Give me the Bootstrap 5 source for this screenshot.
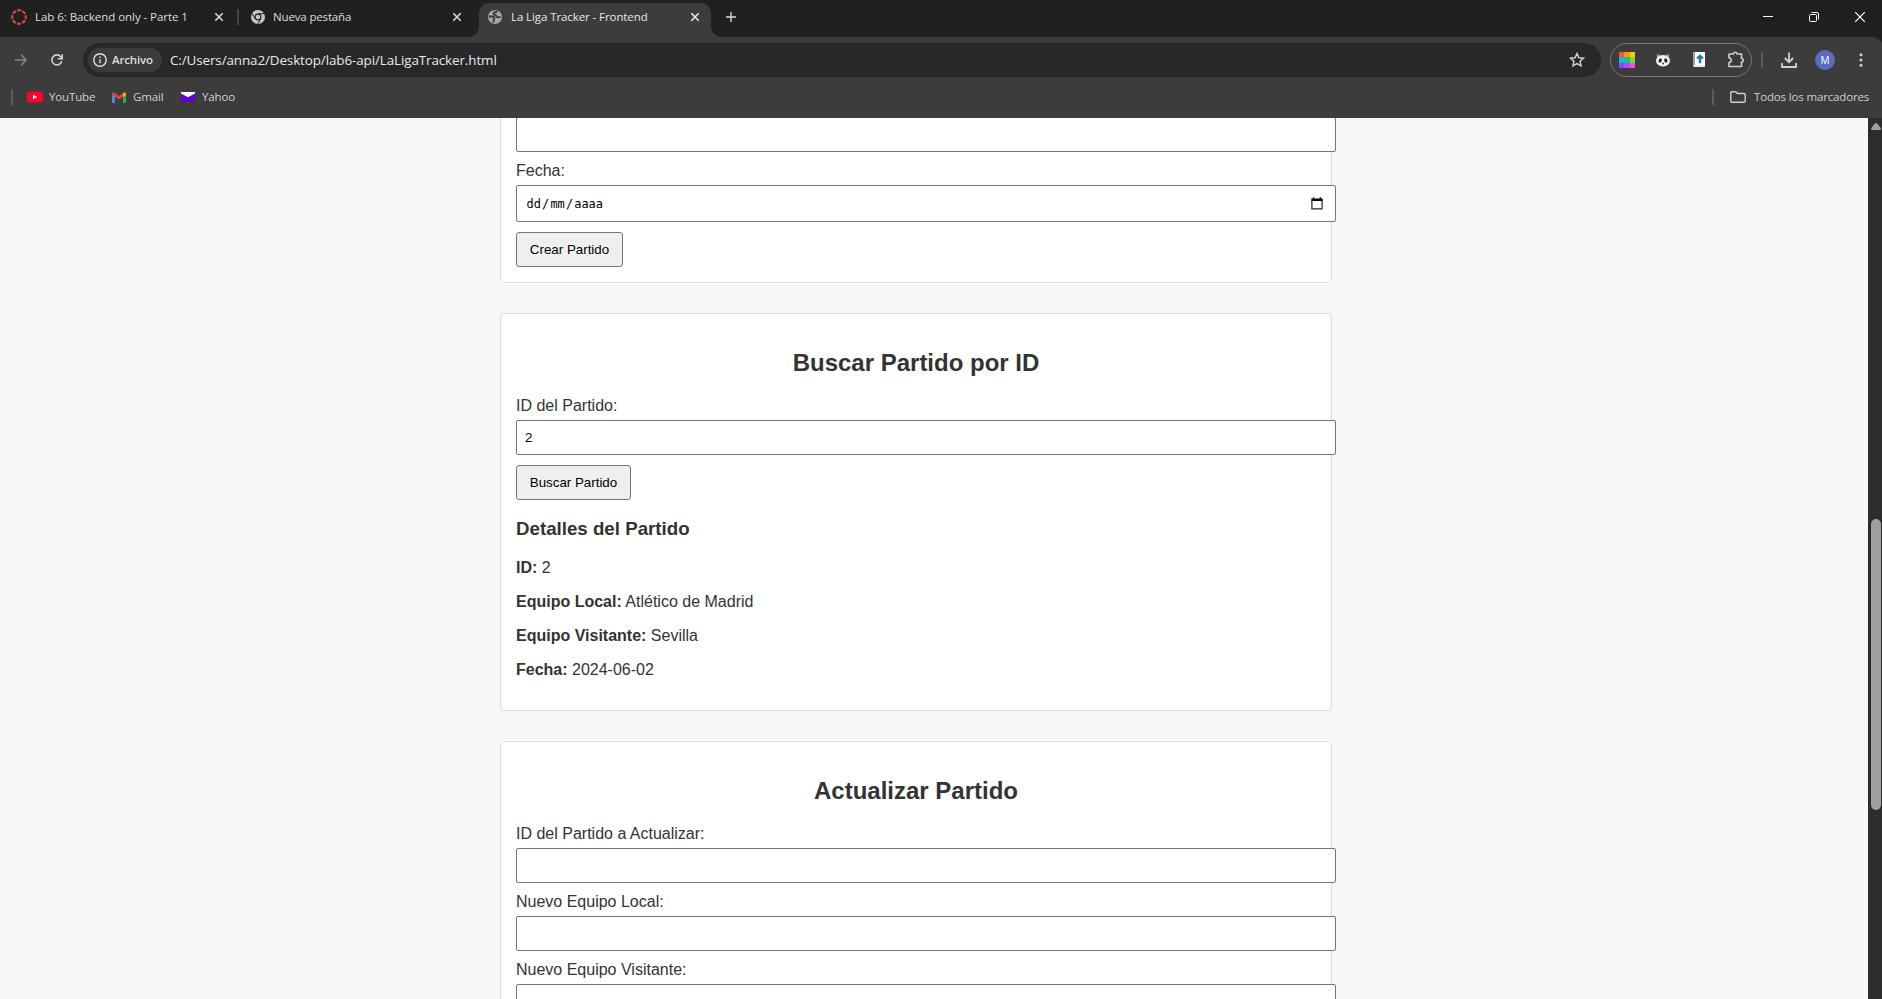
<!DOCTYPE html>
<html lang="es">
<head>
<meta charset="utf-8">
<title>La Liga Tracker - Frontend</title>
<link href="https://cdn.jsdelivr.net/npm/bootstrap@5.3.0/dist/css/bootstrap.min.css" rel="stylesheet">
<style>
  body{height:999px;background:#f7f7f7;color:#333;font-family:"Liberation Sans",Arial,sans-serif;font-size:16px;line-height:18px}
  svg{display:block;flex:none}
  /* browser chrome */
  .chrome{font-family:"Open Sans","Noto Sans",sans-serif;font-size:11.5px;line-height:16px;letter-spacing:-.15px;color:#dcdcdc;background:#1f2120;flex:none}
  .tabstrip{height:37px}
  .tab{height:37px;padding-bottom:3px}
  .tab-a{width:237px;padding-left:11px;letter-spacing:-.05px}
  .tab-b{width:240px;padding-left:12px}
  .tab-on{width:232px;height:34px;margin-top:3px;padding:0 0 6px 9px;background:#3c3c3c;border-radius:10px 10px 0 0;position:relative;color:#e8e8e8;letter-spacing:-.09px}
  .tab-on::before,.tab-on::after{content:"";position:absolute;bottom:0;width:10px;height:10px}
  .tab-on::before{left:-10px;background:radial-gradient(circle at 0 0,#1f2120 9.5px,#3c3c3c 10px)}
  .tab-on::after{right:-10px;background:radial-gradient(circle at 100% 0,#1f2120 9.5px,#3c3c3c 10px)}
  .vline{width:2px;height:16px;background:#5c5c5c;flex:none}
  .tab .vline{background:#444}
  .tab-x{margin-left:auto;margin-right:13px}
  .winbtn{width:46px;height:34px}
  .toolbar{height:46px;padding-top:6px;background:#3c3c3c;border-top-right-radius:9px}
  .slot{width:36px;height:34px;flex:none}
  .omni{width:1518px;height:34px;border-radius:17px;background:#282828;padding-left:5px;flex:none}
  .chip{width:74px;height:24px;border-radius:12px;background:#3c3c3c;padding-left:5px;font-weight:600}
  .url{font-size:13.4px;letter-spacing:-.09px;color:#e8e8e8}
  .exts{width:142px;height:34px;border:1px solid #777;border-radius:17px;margin-left:9px;flex:none}
  .avatar{width:20px;height:20px;border-radius:50%;background:#5c6bc0;color:#fff;font-size:10px}
  .bookmarks{height:35px;padding:0 12px 7px 11px;background:#3c3c3c;color:#cfcfcf}
  .t{white-space:nowrap}
  /* page */
  .page{overflow:hidden;min-height:0}
  .col-main{width:832px;margin-left:500px;margin-top:-1px;flex:none}
  .panel{background:#fff;border:1px solid #ddd;border-radius:5px;padding:15px;margin-bottom:30px}
  .panel-first{border-top:0;border-radius:0 0 5px 5px;padding-top:0}
  .panel h2{font-size:24px;line-height:28px;font-weight:700;margin:20px 0;text-align:center}
  .panel h3{font-size:18.72px;line-height:22px;font-weight:700;margin:18px 0 19px}
  .panel p{margin:0 0 16px}
  .panel label{display:block;margin-bottom:5px}
  .field{display:flex;align-items:center;width:820px;height:35px;background:#fff;border:1px solid #767676;border-radius:2px;padding:0 8px;margin-bottom:10px;font-size:13.33px;color:#000;outline:0}
  .field-date{height:37px;justify-content:space-between;padding:0 12px 0 9.5px;font-family:"DejaVu Sans Mono",monospace;font-size:11.9px}
  .field-date i{font-style:normal;margin:0 1.2px}
  .act{height:35px;border:1px solid #767676;border-radius:3px;background:#efefef;color:#000;font-size:13.33px;padding:0;display:block}
  .scroller{width:14px;background:#2c2c2c;padding:5px 1px 0 3px;flex:none}
  .thumb{width:10px;height:291px;border-radius:5px;background:#9f9f9f;margin-top:389px}
</style>
</head>
<body class="d-flex flex-column overflow-hidden">
<header class="chrome">
  <div class="tabstrip d-flex">
    <div class="tab tab-a d-flex align-items-center">
      <svg width="16" height="16" viewBox="0 0 16 16"><circle cx="8" cy="8" r="6.8" fill="none" stroke="#d64a3c" stroke-width="2.2" stroke-dasharray="4 1.34" stroke-dashoffset="2"/></svg>
      <span class="t" style="margin-left:8px">Lab 6: Backend only - Parte 1</span>
      <svg class="tab-x" width="10" height="10" viewBox="0 0 10 10" stroke="#d8d8d8" stroke-width="1.6"><path d="M1.3 1.3l7.4 7.4M8.7 1.3L1.3 8.7"/></svg>
    </div>
    <div class="tab d-flex align-items-center"><span class="vline"></span></div>
    <div class="tab tab-b d-flex align-items-center">
      <svg width="14" height="14" viewBox="0 0 14 14"><circle cx="7" cy="7" r="7" fill="#c4c7c5"/><circle cx="7" cy="7" r="3.4" fill="#1f2120"/><circle cx="7" cy="7" r="2.3" fill="#c4c7c5"/><path d="M7 3.7h6.3M4.15 8.7L1.1 3.500M9.850 8.700L6.700 14" stroke="#1f2120" stroke-width="1"/></svg>
      <span class="t" style="margin-left:8px">Nueva pestaña</span>
      <svg class="tab-x" style="margin-right:17px" width="10" height="10" viewBox="0 0 10 10" stroke="#d8d8d8" stroke-width="1.6"><path d="M1.3 1.3l7.4 7.4M8.7 1.3L1.3 8.7"/></svg>
    </div>
    <div class="tab-on d-flex align-items-center">
      <svg width="14" height="14" viewBox="0 0 14 14"><circle cx="7" cy="7" r="7" fill="#a2a8ad"/><path d="M9 .8Q8.800 2.200 7 2.300 5.300 2.400 5.600 4 5.700 5 7.300 5 8.300 5 8.300 6.300 8.300 7.300 9.800 7.200 11.500 7.200 12.800 6.800M.8 6.500H4Q6 6.500 6.300 8.200 6.500 9.500 5.600 10 5.200 10.500 5.600 12.500" fill="none" stroke="#3c3c3c" stroke-width="1.900"/></svg>
      <span class="t" style="margin-left:9px">La Liga Tracker - Frontend</span>
      <svg class="tab-x" style="margin-right:11px" width="10" height="10" viewBox="0 0 10 10" stroke="#e8e8e8" stroke-width="1.6"><path d="M1.3 1.3l7.4 7.4M8.7 1.3L1.3 8.7"/></svg>
    </div>
    <svg style="margin:12px 0 0 15px" width="10" height="10" viewBox="0 0 10 10" stroke="#d8d8d8" stroke-width="1.4"><path d="M0 5h10M5 0v10"/></svg>
    <div class="ms-auto d-flex" style="margin-right:-1px">
      <div class="winbtn d-flex align-items-center justify-content-center"><svg width="10" height="10"><path d="M0 4.5h10" stroke="#fff"/></svg></div>
      <div class="winbtn d-flex align-items-center justify-content-center"><svg width="10" height="10" fill="none" stroke="#fff"><rect x=".5" y="2.5" width="7" height="7" rx="1"/><path d="M2.5 .5H8q1.500 0 1.500 1.500V7.500"/></svg></div>
      <div class="winbtn d-flex align-items-center justify-content-center"><svg width="10" height="10" stroke="#fff" stroke-width="1.2"><path d="M0 0l10 10M10 0L0 10"/></svg></div>
    </div>
  </div>
  <div class="toolbar d-flex">
    <div class="slot d-flex align-items-center justify-content-center" style="margin-left:3px"><svg width="12" height="12" fill="none" stroke="#858585" stroke-width="1.5"><path d="M0 6h11M6 .8L11.200 6 6 11.200"/></svg></div>
    <div class="slot d-flex align-items-center justify-content-center"><svg width="12" height="12" fill="none" stroke="#cfcfcf" stroke-width="1.6"><path d="M10.700 7.200A5 5 0 1 1 9.800 2.800L11 4.500M11.200 .2V4.700H6.800"/></svg></div>
    <div class="omni d-flex align-items-center" style="margin-left:8px">
      <div class="chip d-flex align-items-center"><svg width="14" height="14" fill="none" stroke="#dedede" stroke-width="1.4"><circle cx="7" cy="7" r="6.2"/><path d="M7 6.200v4M7 3.500v1.500"/></svg><span class="t" style="margin-left:5px">Archivo</span></div>
      <span class="t url" style="margin-left:8px">C:/Users/anna2/Desktop/lab6-api/LaLigaTracker.html</span>
      <svg class="ms-auto" style="margin-right:16px" width="16" height="16" fill="none" stroke="#cfcfcf" stroke-width="1.5"><path d="M8 1.500l1.900 4.200 4.600.5-3.400 3.100.9 4.500L8 11.500l-4 2.300.9-4.500L1.500 6.200l4.600-.5z"/></svg>
    </div>
    <div class="exts d-flex justify-content-between align-items-center">
      <svg style="margin-left:8px" width="16" height="16"><path fill="#ff5a1f" d="M0 0h6v5H0z"/><path fill="#ff9300" d="M5 0h6v5H5z"/><path fill="#ffcc00" d="M11 0h5v6h-5z"/><path fill="#13b5ea" d="M0 5h6v6H0z"/><path fill="#14c47a" d="M5 5h6v6H5z"/><path fill="#7bd63a" d="M11 5h5v6h-5z"/><path fill="#7a4dff" d="M0 11h6v5H0z"/><path fill="#b34dff" d="M5 11h6v5H5z"/><path fill="#f04de8" d="M11 11h5v5h-5z"/></svg>
      <svg width="16" height="16"><circle cx="3.500" cy="4" r="2" fill="#8d8d8d"/><circle cx="12.500" cy="4" r="2" fill="#8d8d8d"/><ellipse cx="8" cy="8.700" rx="7" ry="5.700" fill="#f5f5f5"/><ellipse cx="5.200" cy="8.500" rx="1.600" ry="2.200" fill="#222" transform="rotate(20 5.200 8.500)"/><ellipse cx="10.800" cy="8.500" rx="1.600" ry="2.200" fill="#222" transform="rotate(-20 10.800 8.500)"/><circle cx="8" cy="11.500" r=".9" fill="#222"/></svg>
      <svg width="16" height="16"><path fill="#fff" d="M2 0h12v13.500H2z"/><path fill="#a9a09c" d="M2 0h2v15H2z"/><path fill="#f3ead8" d="M3 13h11v2H3z"/><path fill="#1875b8" d="M9 2.200l3.600 3.600-1.100 1.300L10.200 6.400v4.800H7.800V6.400L6.500 7.100 5.400 5.800z"/></svg>
      <svg style="margin-right:6px" width="18" height="18" fill="none" stroke="#cfcfcf" stroke-width="1.600" stroke-linejoin="round"><path d="M2 3h4.500C6.500 .7 10 .7 10 3h4.500v4.500c2.300 0 2.300 3.500 0 3.500v4.500H2V11.500c3 0 3-4.500 0-4.500z"/></svg>
    </div>
    <div class="d-flex align-items-center" style="height:34px;margin-left:9px"><span class="vline"></span></div>
    <div class="slot d-flex align-items-center justify-content-center" style="margin-left:8px"><svg width="16" height="16" fill="none" stroke="#cfcfcf" stroke-width="1.8"><path d="M8 .5V10M3.800 6L8 10.200 12.200 6M1 11v4h14v-4"/></svg></div>
    <div class="slot d-flex align-items-center justify-content-center"><span class="avatar d-flex align-items-center justify-content-center">M</span></div>
    <div class="slot d-flex align-items-center justify-content-center"><svg width="4" height="14" fill="#cfcfcf"><circle cx="2" cy="1.800" r="1.500"/><circle cx="2" cy="7" r="1.500"/><circle cx="2" cy="12.200" r="1.500"/></svg></div>
  </div>
  <div class="bookmarks d-flex align-items-center">
    <span class="vline"></span>
    <svg style="margin-left:14px" width="16" height="12"><rect y=".5" width="16" height="11" rx="2.500" fill="#ff0033"/><path fill="#fff" d="M6 3.700v4.600L10.200 6z"/></svg>
    <span class="t" style="margin-left:6px;width:47px">YouTube</span>
    <svg style="margin-left:16px" width="14" height="11"><path fill="#4285f4" d="M0 2l3 2v7H0z"/><path fill="#34a853" d="M11 4l3-2v9h-3z"/><path fill="#ea4335" d="M0 1.500Q1 0 2.600.8L7 4 11 1v3.500L7 7.600 0 2.600z"/><path fill="#fbbc04" d="M11 1q2-1.500 3 .6V3l-3 2z"/></svg>
    <span class="t" style="margin-left:7px;width:31px">Gmail</span>
    <svg style="margin-left:17px" width="14" height="10"><path fill="#5f01d1" d="M0 0h14v10H0z"/><path fill="#fff" d="M0 0h14v1.500L7 5.200 0 1.500z"/></svg>
    <span class="t" style="margin-left:7px">Yahoo</span>
    <span class="vline ms-auto"></span>
    <svg style="margin-left:16px" width="16" height="12" fill="none" stroke="#cfcfcf" stroke-width="1.4"><path d="M.8 2Q.8.8 2 .8h3.800L7.500 2.500H14q1.200 0 1.200 1.200V10q0 1.200-1.200 1.200H2Q.8 11.200.8 10z"/></svg>
    <span class="t" style="margin-left:8px;width:116px">Todos los marcadores</span>
  </div>
</header>
<div class="page d-flex flex-grow-1">
  <main class="col-main">
    <section class="panel panel-first">
      <input class="field" type="text" aria-label="Equipo Visitante">
      <label>Fecha:</label>
      <div class="field field-date"><span class="t">dd<i>/</i>mm<i>/</i>aaaa</span><svg width="12" height="13"><path fill="#000" d="M.3 1.500h11.400V4H.3zM2 .3h1.300v2H2zM8.700.3H10v2H8.700z"/><path d="M.9 3v8.900h10.200V3" fill="none" stroke="#222" stroke-width="1.2"/></svg></div>
      <button class="act" style="width:107px">Crear Partido</button>
    </section>
    <section class="panel">
      <h2>Buscar Partido por ID</h2>
      <label>ID del Partido:</label>
      <input class="field" type="text" value="2">
      <button class="act" style="width:115px">Buscar Partido</button>
      <h3>Detalles del Partido</h3>
      <p><strong>ID:</strong> 2</p>
      <p><strong>Equipo Local:</strong> Atlético de Madrid</p>
      <p><strong>Equipo Visitante:</strong> Sevilla</p>
      <p><strong>Fecha:</strong> 2024-06-02</p>
    </section>
    <section class="panel">
      <h2>Actualizar Partido</h2>
      <label>ID del Partido a Actualizar:</label>
      <input class="field" type="text">
      <label>Nuevo Equipo Local:</label>
      <input class="field" type="text">
      <label>Nuevo Equipo Visitante:</label>
      <input class="field" type="text">
    </section>
  </main>
  <div class="scroller ms-auto">
    <svg width="10" height="7"><path fill="#9f9f9f" d="M5 0q.8 0 1.400.8L9.700 5q.6 2-1.200 2h-7Q-.3 7 .3 5L3.600.8Q4.200 0 5 0z"/></svg>
    <div class="thumb"></div>
  </div>
</div>
<script src="https://cdn.jsdelivr.net/npm/bootstrap@5.3.0/dist/js/bootstrap.bundle.min.js"></script>
</body>
</html>
